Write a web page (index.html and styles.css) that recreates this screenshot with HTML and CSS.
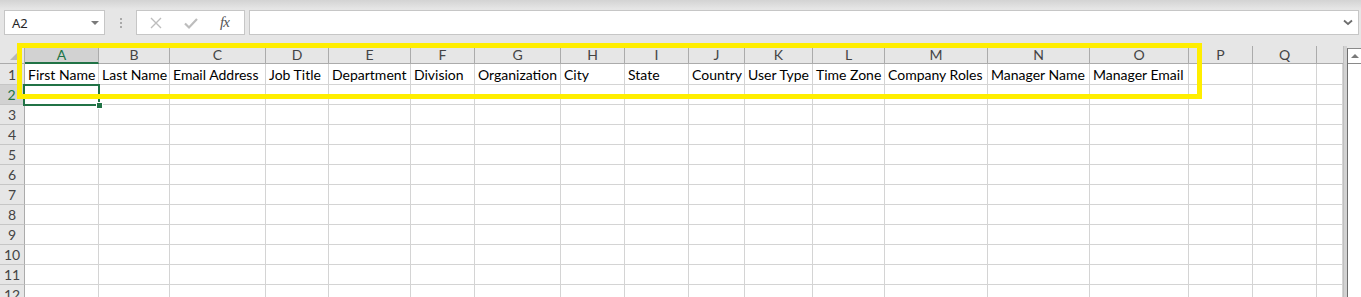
FILE: index.html
```html
<!DOCTYPE html>
<html lang="en">
<head>
    <meta charset="UTF-8">
    <meta name="viewport" content="width=device-width, initial-scale=1.0">
    <title>Users import template</title>
    <link rel="stylesheet" href="styles.css">
</head>
<body>

    <div class="formula-bar">
        <div class="name-box">
            <span>A2</span>
            <span class="caret"></span>
        </div>
        <div class="grip"><i></i><i></i><i></i></div>
        <div class="fx-tools">
            <svg class="tool" width="14" height="14" viewBox="0 0 14 14"><path d="M2 2 L12 12 M12 2 L2 12" stroke="#bdbdbd" stroke-width="1.4" fill="none"/></svg>
            <svg class="tool" width="16" height="14" viewBox="0 0 16 14"><path d="M2 7.5 L6 11.5 L14 3" stroke="#bdbdbd" stroke-width="2.2" fill="none"/></svg>
            <span class="fx">fx</span>
        </div>
        <div class="formula-input">
            <svg width="10" height="7" viewBox="0 0 10 7"><path d="M1 1.5 L5 5 L9 1.5" stroke="#6d6d6d" stroke-width="1.8" fill="none"/></svg>
        </div>
    </div>

    <div class="sheet">
        <div class="grid" id="grid"></div>
        <div class="edge"></div>
        <div class="vscroll">
            <div class="scroll-up"><span></span></div>
        </div>

        <!-- celula ativa A2 -->
        <div class="selection"><span class="handle"></span></div>
        <!-- destaque amarelo dos cabecalhos -->
        <div class="highlight"></div>
    </div>

    <script>
        const columns = [
            { name: 'A', width: 74 }, { name: 'B', width: 71 }, { name: 'C', width: 96 },
            { name: 'D', width: 63 }, { name: 'E', width: 82 }, { name: 'F', width: 64 },
            { name: 'G', width: 86 }, { name: 'H', width: 64 }, { name: 'I', width: 64 },
            { name: 'J', width: 56 }, { name: 'K', width: 68 }, { name: 'L', width: 72 },
            { name: 'M', width: 103 }, { name: 'N', width: 102 }, { name: 'O', width: 99 },
            { name: 'P', width: 64 }, { name: 'Q', width: 64 }, { name: 'R', width: 26 }
        ];
        const headers = [
            'First Name', 'Last Name', 'Email Address', 'Job Title', 'Department',
            'Division', 'Organization', 'City', 'State', 'Country', 'User Type',
            'Time Zone', 'Company Roles', 'Manager Name', 'Manager Email'
        ];
        const totalRows = 12;

        const grid = document.getElementById('grid');
        grid.style.gridTemplateColumns = '25px ' + columns.map(c => c.width + 'px').join(' ');

        function addCell(className, text) {
            const cell = document.createElement('div');
            cell.className = className;
            if (text) cell.textContent = text;
            grid.appendChild(cell);
        }

        // linha dos cabecalhos de coluna
        addCell('corner');
        columns.forEach(col => {
            addCell(col.name === 'R' ? 'col-head last' : (col.name === 'A' ? 'col-head active' : 'col-head'), col.name === 'R' ? '' : col.name);
        });

        // linhas da planilha
        for (let r = 1; r <= totalRows; r++) {
            addCell(r === 2 ? 'row-head active' : 'row-head', r);
            columns.forEach((col, i) => {
                const text = r === 1 && headers[i] ? headers[i] : '';
                addCell(r === 1 ? 'cell first' : 'cell', text);
            });
        }
    </script>

</body>
</html>
```

FILE: styles.css
```css
/* Reset */
* {
    margin: 0;
    padding: 0;
    box-sizing: border-box;
}

body {
    font-family: 'Lato', 'Liberation Sans', sans-serif;
    background: #e6e6e6;
    width: 1361px;
    height: 297px;
    overflow: hidden;
}

/* Barra de formula */
.formula-bar {
    height: 46px;
    display: flex;
    align-items: flex-start;
    padding: 10px 2px 0 4px;
    background: linear-gradient(#d3d3d3, #e6e6e6 9px);
}

.name-box {
    width: 101px;
    height: 25px;
    background: #fff;
    border: 1px solid #c6c6c6;
    display: flex;
    align-items: center;
    justify-content: space-between;
    padding: 0 5px 0 7px;
    font-family: 'Noto Sans', sans-serif;
    font-size: 13px;
    color: #262626;
}

.caret {
    width: 0;
    height: 0;
    border-left: 4px solid transparent;
    border-right: 4px solid transparent;
    border-top: 4px solid #7a7a7a;
}

.grip {
    width: 31px;
    height: 25px;
    display: flex;
    flex-direction: column;
    align-items: center;
    justify-content: center;
    gap: 2px;
}

.grip i {
    width: 2px;
    height: 2px;
    background: #a9a9a9;
}

.fx-tools {
    width: 109px;
    height: 25px;
    margin-right: 4px;
    background: #fff;
    border: 1px solid #c6c6c6;
    display: flex;
    align-items: center;
    padding: 0 0 0 12px;
    gap: 20px;
}

.fx {
    font-family: 'Liberation Serif', serif;
    font-style: italic;
    font-size: 15px;
    color: #555;
    letter-spacing: -1px;
    margin-left: 1px;
}

.formula-input {
    flex: 1;
    height: 25px;
    background: #fff;
    border: 1px solid #c6c6c6;
    display: flex;
    align-items: center;
    justify-content: flex-end;
    padding-right: 5px;
}

/* Planilha */
.sheet {
    position: relative;
    display: flex;
    align-items: flex-start;
}

.grid {
    display: grid;
    grid-template-rows: 18px 21px;
    grid-auto-rows: 20px;
    width: 1343px;
    background: #fff;
    font-family: 'Lato', 'Liberation Sans', sans-serif;
    font-size: 14px;
}

.corner {
    position: relative;
    background: #e6e6e6;
    border-right: 1px solid #ababab;
    border-bottom: 1px solid #ababab;
}

.corner::after {
    content: '';
    position: absolute;
    right: 3px;
    bottom: 3px;
    width: 11px;
    height: 11px;
    background: #b7b7b7;
    clip-path: polygon(100% 0, 100% 100%, 0 100%);
}

.col-head {
    background: #e6e6e6;
    color: #444;
    border-right: 1px solid #ababab;
    border-bottom: 1px solid #ababab;
    display: flex;
    align-items: center;
    justify-content: center;
}

.col-head.last {
    border-right: none;
}

.col-head.active {
    background: #d2d2d2;
    color: #217346;
    border-bottom: 2px solid #217346;
}

.row-head {
    background: #e6e6e6;
    color: #444;
    border-right: 1px solid #ababab;
    border-bottom: 1px solid #c6c6c6;
    display: flex;
    align-items: center;
    justify-content: center;
}

.row-head.active {
    background: #d2d2d2;
    color: #217346;
    border-right: 2px solid #217346;
}

.cell {
    border-right: 1px solid #d4d4d4;
    border-bottom: 1px solid #d4d4d4;
    white-space: nowrap;
    overflow: hidden;
    color: #000;
    padding: 0 2px 1px 3px;
    display: flex;
    align-items: flex-end;
}

.edge {
    width: 4px;
    height: 251px;
    background: #d2d2d2;
    border-left: 1px solid #c0c0c0;
}

.vscroll {
    width: 14px;
    height: 249px;
    margin-top: 2px;
    background: #fff;
    border-left: 1px solid #6e6e6e;
    border-top: 1px solid #8a8a8a;
}

.scroll-up {
    height: 15px;
    border-bottom: 1px solid #8a8a8a;
    display: flex;
    align-items: center;
    justify-content: center;
}

.scroll-up span {
    width: 0;
    height: 0;
    border-left: 4px solid transparent;
    border-right: 4px solid transparent;
    border-bottom: 4px solid #7a7a7a;
}

/* Celula selecionada */
.selection {
    position: absolute;
    left: 23px;
    top: 38px;
    width: 77px;
    height: 22px;
    border: 2px solid #217346;
}

.handle {
    position: absolute;
    right: -5px;
    bottom: -5px;
    width: 7px;
    height: 7px;
    background: #217346;
    border: 1px solid #fff;
}

/* Destaque amarelo */
.highlight {
    position: absolute;
    left: 17px;
    top: -3px;
    width: 1185px;
    height: 56px;
    border: 5px solid #ffee00;
}
```
